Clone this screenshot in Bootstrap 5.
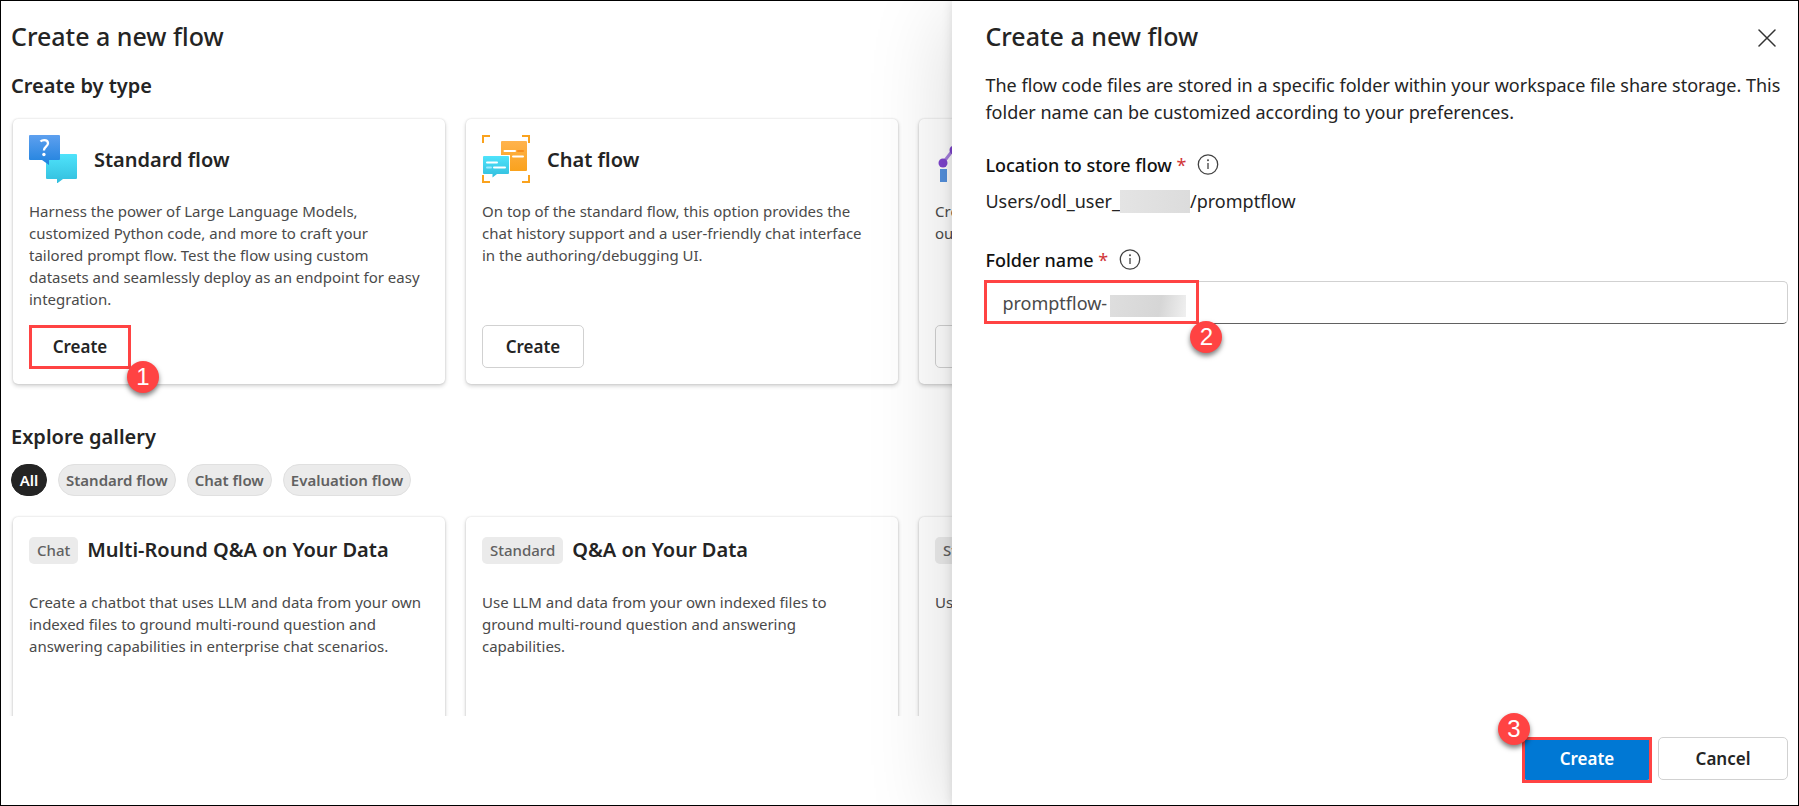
<!DOCTYPE html>
<html lang="en">
<head>
<meta charset="utf-8">
<meta name="viewport" content="width=device-width, initial-scale=1">
<title>Create a new flow</title>
<link href="https://cdn.jsdelivr.net/npm/bootstrap@5.3.0/dist/css/bootstrap.min.css" rel="stylesheet">
<style>
  :root { --ink: #242424; --muted: #4a4a4a; --hot: #ff4343; }
  body { font-family: "Noto Sans", "Open Sans", sans-serif; font-size: 18px; color: var(--ink); background: #fff; }
  .shell { height: 100vh; border: 1px solid #000; }
  .page { min-width: 0; padding: 17px 0 0 10px; }
  .page-foot { height: 89px; }
  .scroll-area { min-height: 0; margin-left: -10px; padding-left: 10px; }
  .title { font-size: 25px; line-height: 36px; font-weight: 500; margin: 0; }
  .section-title { font-size: 20px; line-height: 28px; font-weight: 600; margin: 0; }
  .type-title { margin-top: 18px; }
  .type-cards { margin-top: 19px; }
  .gallery-title { margin-top: 39px; }
  .pills { margin-top: 13px; gap: 11px; }
  .gallery-cards { margin-top: 21px; }
  .cards { gap: 21px; padding-left: 2px; }
  .tile { flex: 0 0 27rem; height: 265px; padding: 16px; background: #fff; border-radius: 5px; box-shadow: 0 0 2px rgba(0,0,0,.16), 0 2px 4px rgba(0,0,0,.18); }
  .tile-head { height: 48px; gap: 17px; }
  .tile-head .section-title { padding-top: 2px; }
  .tile-text { font-size: 15px; line-height: 22px; color: var(--muted); margin-top: 17px; padding-right: 5px; }
  .gallery-cards .tile-text { margin-top: 25px; }
  .btn-flow { --bs-btn-color: var(--ink); --bs-btn-border-color: #d1d1d1; --bs-btn-bg: #fff; --bs-btn-hover-bg: #f5f5f5; --bs-btn-hover-border-color: #c7c7c7; --bs-btn-padding-x: 0; --bs-btn-padding-y: 0; --bs-btn-border-radius: 5px; font-size: 17px; font-weight: 600; width: 102px; height: 43px; }
  .btn-wide { width: 130px; }
  .btn-blue { --bs-btn-color: #fff; --bs-btn-bg: #0078d4; --bs-btn-border-color: #0078d4; --bs-btn-hover-color: #fff; --bs-btn-hover-bg: #106ebe; --bs-btn-hover-border-color: #106ebe; }
  .hot-box { position: relative; display: flex; }
  .hot-box::after { content: ""; position: absolute; inset: 0 0 -1px; border: 3px solid var(--hot); pointer-events: none; }
  .hot-blue::after { bottom: -3px; }
  .step { position: absolute; z-index: 2; width: 32px; height: 32px; border-radius: 50%; background: var(--hot); color: #fff; font: 24px/32px "Liberation Sans", sans-serif; text-align: center; box-shadow: 0 3px 5px rgba(0,0,0,.5); }
  .step-after { right: -28px; bottom: -25px; }
  .step-before { left: -24px; top: -24px; }
  .pill { height: 32px; min-width: 36px; padding: 0 7px; border: 1px solid #e0e0e0; border-radius: 16px; background: #ebebeb; color: #616161; font-size: 15px; font-weight: 600; line-height: 30px; }
  .pill.active { background: var(--ink); border-color: var(--ink); color: #fff; }
  .kind { height: 27px; padding: 0 8px; border-radius: 5px; background: #ebebeb; color: #616161; font-size: 15px; line-height: 27px; font-weight: 500; margin-top: 2px; }
  .gallery-head { height: 33px; gap: 9px; }
  .panel { flex: 0 0 calc(47% + 1px); z-index: 3; padding: 17px 10px 25px 33px; background: #fff; box-shadow: 0 0 10px rgba(0,0,0,.12), 0 16px 80px rgba(0,0,0,.16); }
  .intro { line-height: 27px; margin-top: 18px; }
  .location-row { margin-top: 25px; }
  .path-row { margin-top: 8px; line-height: 28px; }
  .folder-row { margin-top: 31px; }
  .info { margin-left: 11px; }
  .field-label { font-weight: 500; color: #111; line-height: 28px; }
  .req { color: #d13438; font-weight: 400; }
  .redacted { background: linear-gradient(90deg, #e4e4e4, #dcdcdc); width: 70px; height: 23px; }
  .red-name { position: absolute; left: 126px; top: 14px; width: 76px; height: 22px; background: linear-gradient(100deg, #dedede, #d6d6d6 65%, #f0f0f0); }
  .field { margin: 7px 0 0 -1px; }
  .folder-input { height: 43px; border: 1px solid #d1d1d1; border-bottom-color: #616161; border-radius: 5px; padding: 0 17px; font-size: 18px; color: var(--muted); }
  .hot-field { position: absolute; left: 0; top: -1px; width: 215px; height: 44px; border: 3px solid var(--hot); pointer-events: none; }
  .hot-field .step { right: -26px; bottom: -32px; }
  .close-x { padding: 3px 0 0; border: 0; background: none; line-height: 0; margin-right: 12px; }
  .panel-actions { gap: 6px; }
</style>
</head>
<body>
<div class="shell d-flex overflow-hidden">
  <main class="page flex-grow-1 d-flex flex-column overflow-hidden">
    <h1 class="title">Create a new flow</h1>
    <div class="scroll-area flex-grow-1 overflow-hidden">
      <h2 class="section-title type-title">Create by type</h2>
      <div class="cards type-cards d-flex">
        <article class="tile d-flex flex-column align-items-start">
          <div class="tile-head d-flex align-items-center">
            <svg width="48" height="48" viewBox="0 0 48 48" aria-hidden="true">
              <defs>
                <linearGradient id="bl" x2="0" y2="1"><stop stop-color="#5ea0ef"/><stop offset="1" stop-color="#1f82de"/></linearGradient>
                <linearGradient id="cy" x2="0" y2="1"><stop stop-color="#4fe3fb"/><stop offset="1" stop-color="#32bedd"/></linearGradient>
              </defs>
              <path fill="url(#cy)" d="M18 19h29a1 1 0 0 1 1 1v23a1 1 0 0 1-1 1H34l-6 4.500v-4.500H18a1 1 0 0 1-1-1V20a1 1 0 0 1 1-1z"/>
              <path fill="url(#bl)" d="M1 0h29a1 1 0 0 1 1 1v23a1 1 0 0 1-1 1H20v5l-7-5H1a1 1 0 0 1-1-1V1a1 1 0 0 1 1-1z"/>
              <path d="M11.500 6.500c1-1 2.300-1.400 3.700-1.400 2.300 0 3.800 1.200 3.800 3.200 0 3.400-4.100 3.500-4.100 7.200" fill="none" stroke="#fff" stroke-width="2.300"/>
              <circle cx="14.900" cy="19.500" r="1.700" fill="#fff"/>
            </svg>
            <h3 class="section-title">Standard flow</h3>
          </div>
          <p class="tile-text mb-auto">Harness the power of Large Language Models, customized Python code, and more to craft your tailored prompt flow. Test the flow using custom datasets and seamlessly deploy as an endpoint for easy integration.</p>
          <div class="hot-box"><button type="button" class="btn btn-flow">Create</button><span class="step step-after">1</span></div>
        </article>
        <article class="tile d-flex flex-column align-items-start">
          <div class="tile-head d-flex align-items-center">
            <svg width="48" height="48" viewBox="0 0 48 48" aria-hidden="true">
              <defs><linearGradient id="or" x2="0" y2="1"><stop stop-color="#ffb34d"/><stop offset="1" stop-color="#faa21d"/></linearGradient></defs>
              <path d="M1 8V1h7M40 1h7v7M47 40v7h-7M8 47H1v-7" fill="none" stroke="#faa21d" stroke-width="2"/>
              <rect x="19" y="6" width="26" height="30" rx="1" fill="url(#or)"/>
              <path d="M22.500 16H33M31 21.500h10" stroke="#fff" stroke-width="2" stroke-linecap="round"/>
              <path d="M36 16h5" stroke="#f78d1e" stroke-width="2" stroke-linecap="round"/>
              <path fill="#fff" d="M3 20h25v20H3z"/>
              <path fill="url(#cy)" d="M2 21h24a1 1 0 0 1 1 1v16a1 1 0 0 1-1 1H15l-4.500 3.500V39H2a1 1 0 0 1-1-1V22a1 1 0 0 1 1-1z"/>
              <path d="M5 27.500h10M12 32.500h11" stroke="#fff" stroke-width="2" stroke-linecap="round"/>
              <path d="M5 32.500h4" stroke="#9cebff" stroke-width="2" stroke-linecap="round"/>
            </svg>
            <h3 class="section-title">Chat flow</h3>
          </div>
          <p class="tile-text mb-auto">On top of the standard flow, this option provides the chat history support and a user-friendly chat interface in the authoring/debugging UI.</p>
          <button type="button" class="btn btn-flow">Create</button>
        </article>
        <article class="tile d-flex flex-column align-items-start">
          <div class="tile-head d-flex align-items-center">
            <svg width="48" height="48" viewBox="0 0 48 48" aria-hidden="true">
              <path d="M8 28 18 15l10 8L41 6" fill="none" stroke="#a67fe0" stroke-width="3"/>
              <g fill="#7f45cf"><circle cx="8" cy="28" r="4.500"/><circle cx="19" cy="15" r="4.500"/><circle cx="28" cy="23" r="4.500"/><circle cx="41" cy="6" r="4.500"/></g>
              <path fill="#5592df" d="M5 34h7v13H5zM18 24h7v23h-7zM28 30h7v17h-7zM38 14h7v33h-7z"/>
            </svg>
          </div>
          <p class="tile-text mb-auto">Create<br>output</p>
          <button type="button" class="btn btn-flow" aria-label="Create"></button>
        </article>
      </div>

      <h2 class="section-title gallery-title">Explore gallery</h2>
      <div class="pills d-flex">
        <button type="button" class="pill active">All</button>
        <button type="button" class="pill">Standard flow</button>
        <button type="button" class="pill">Chat flow</button>
        <button type="button" class="pill">Evaluation flow</button>
      </div>
      <div class="cards gallery-cards d-flex">
        <article class="tile">
          <div class="gallery-head d-flex align-items-center"><span class="kind">Chat</span><h3 class="section-title">Multi-Round Q&amp;A on Your Data</h3></div>
          <p class="tile-text">Create a chatbot that uses LLM and data from your own indexed files to ground multi-round question and answering capabilities in enterprise chat scenarios.</p>
        </article>
        <article class="tile">
          <div class="gallery-head d-flex align-items-center"><span class="kind">Standard</span><h3 class="section-title">Q&amp;A on Your Data</h3></div>
          <p class="tile-text">Use LLM and data from your own indexed files to ground multi-round question and answering capabilities.</p>
        </article>
        <article class="tile">
          <div class="gallery-head d-flex align-items-center"><span class="kind">Standard</span></div>
          <p class="tile-text">Use</p>
        </article>
      </div>
    </div>
    <div class="page-foot flex-shrink-0"></div>
  </main>

  <aside class="panel d-flex flex-column" aria-label="Create a new flow">
    <div class="d-flex justify-content-between align-items-center">
      <h2 class="title">Create a new flow</h2>
      <button type="button" class="close-x" aria-label="Close"><svg width="18" height="18" viewBox="0 0 18 18" stroke="#333" stroke-width="1.500" stroke-linecap="round"><path d="M1 1l16 16M17 1L1 17"/></svg></button>
    </div>
    <p class="intro mb-0">The flow code files are stored in a specific folder within your workspace file share storage. This folder name can be customized according to your preferences.</p>
    <div class="location-row d-flex align-items-center">
      <span class="field-label">Location to store flow <span class="req">*</span></span>
      <svg class="info" width="22" height="22" viewBox="0 0 22 22" fill="none" stroke="#424242" stroke-width="1.300"><circle cx="11" cy="10.500" r="9.700"/><path d="M11 9v6"/><circle cx="11" cy="6.300" r=".4"/></svg>
    </div>
    <div class="path-row d-flex align-items-center">Users/odl_user_<span class="redacted"></span>/promptflow</div>
    <div class="folder-row d-flex align-items-center">
      <label class="field-label" for="folder">Folder name <span class="req">*</span></label>
      <svg class="info" width="22" height="22" viewBox="0 0 22 22" fill="none" stroke="#424242" stroke-width="1.300"><circle cx="11" cy="10.500" r="9.700"/><path d="M11 9v6"/><circle cx="11" cy="6.300" r=".4"/></svg>
    </div>
    <div class="field position-relative">
      <input id="folder" class="folder-input form-control" type="text" value="promptflow-">
      <span class="red-name"></span>
      <div class="hot-field"><span class="step">2</span></div>
    </div>
    <div class="panel-actions mt-auto d-flex justify-content-end">
      <div class="hot-box hot-blue"><button type="button" class="btn btn-flow btn-wide btn-blue">Create</button><span class="step step-before">3</span></div>
      <button type="button" class="btn btn-flow btn-wide">Cancel</button>
    </div>
  </aside>
</div>
<script src="https://cdn.jsdelivr.net/npm/bootstrap@5.3.0/dist/js/bootstrap.bundle.min.js"></script>
</body>
</html>
